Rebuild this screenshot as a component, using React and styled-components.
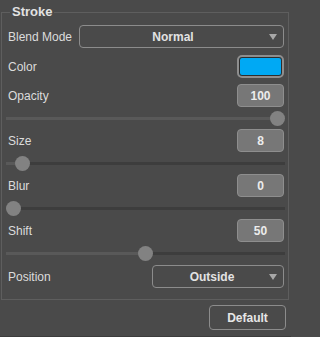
import React from 'react'
import styled, { createGlobalStyle } from 'styled-components'

const GlobalStyle = createGlobalStyle`
  html, body {
    margin: 0;
    padding: 0;
    background: #4a4a4a;
  }
`

const Panel = styled.div`
  width: 291px;
  height: 337px;
  box-sizing: border-box;
  background: #4a4a4a;
  border-bottom: 1px solid #3c3c3c;
  font-family: "Liberation Sans", Arial, sans-serif;
  font-size: 12px;
  color: #dcdcdc;
  display: flex;
  flex-direction: column;
`

const Group = styled.fieldset`
  margin: 4px 2px 0 1px;
  padding: 5px 4px 11px 6px;
  border: 1px solid #5e5e5e;
  display: flex;
  flex-direction: column;
  min-width: 0;

  legend {
    margin-left: 2px;
    padding: 0 2px;
    font-size: 13px;
    font-weight: bold;
    line-height: 16px;
    color: #e2e2e2;
  }
`

const Row = styled.div`
  display: flex;
  align-items: center;
  justify-content: space-between;
  height: 23px;
  margin-top: ${(p) => p.$gap || 0}px;
`

const Label = styled.span`
  white-space: nowrap;
`

const Select = styled.div`
  box-sizing: border-box;
  width: ${(p) => p.$width}px;
  height: 23px;
  border: 1px solid #8c8c8c;
  border-radius: 4px;
  display: flex;
  align-items: center;
  justify-content: center;
  padding-right: ${(p) => p.$shift}px;
  position: relative;
  font-weight: bold;
  color: #e2e2e2;

  &::after {
    content: '';
    position: absolute;
    right: 6px;
    top: 8px;
    border-left: 4px solid transparent;
    border-right: 4px solid transparent;
    border-top: 6px solid #a8a8a8;
  }
`

const Swatch = styled.div`
  box-sizing: border-box;
  width: 47px;
  height: 23px;
  border: 2px solid #8e8e8e;
  border-radius: 5px;
  overflow: hidden;

  div {
    height: 100%;
    border: 1px solid #2e2e2e;
    border-radius: 3px;
    background: #00a9f4;
    box-sizing: border-box;
  }
`

const ValueBox = styled.div`
  box-sizing: border-box;
  width: 47px;
  height: 23px;
  border: 1px solid #8e8e8e;
  border-radius: 4px;
  background: #777777;
  display: flex;
  align-items: center;
  justify-content: center;
  font-weight: bold;
  color: #ececec;
`

const Slider = styled.div`
  position: relative;
  height: 22px;
  margin: 0 -1px 0 -2px;
  display: flex;
  align-items: center;
`

const Track = styled.div`
  position: relative;
  width: 100%;
  height: 3px;
  background: #3d3d3d;
`

const Fill = styled.div`
  height: 100%;
  background: #595959;
`

const Thumb = styled.div`
  position: absolute;
  top: 50%;
  width: 15px;
  height: 15px;
  margin-top: -7px;
  border-radius: 50%;
  background: #828282;
`

const Footer = styled.div`
  flex: 1;
  display: flex;
  justify-content: flex-end;
  align-items: flex-start;
  padding: 5px 5px 0 0;
`

const Button = styled.div`
  box-sizing: border-box;
  width: 77px;
  height: 25px;
  border: 1px solid #8c8c8c;
  border-radius: 4px;
  display: flex;
  align-items: center;
  justify-content: center;
  font-weight: bold;
  color: #e6e6e6;
`

const controls = [
  { label: 'Opacity', value: 100, pct: 1, gap: 6 },
  { label: 'Size', value: 8, pct: 0.034 },
  { label: 'Blur', value: 0, pct: 0 },
  { label: 'Shift', value: 50, pct: 0.5 },
]

const RangeControl = ({ label, value, pct, gap }) => (
  <>
    <Row $gap={gap}>
      <Label>{label}</Label>
      <ValueBox>{value}</ValueBox>
    </Row>
    <Slider>
      <Track>
        <Fill style={{ width: `calc(7px + ${pct} * (100% - 14px))` }} />
      </Track>
      <Thumb style={{ left: `calc(${pct} * (100% - 15px))` }} />
    </Slider>
  </>
)

export default function App() {
  return (
    <Panel>
      <GlobalStyle />
      <Group>
        <legend>Stroke</legend>
        <Row>
          <Label>Blend Mode</Label>
          <Select $width={205} $shift={17}>Normal</Select>
        </Row>
        <Row $gap={7}>
          <Label>Color</Label>
          <Swatch><div /></Swatch>
        </Row>
        {controls.map((c) => (
          <RangeControl key={c.label} {...c} />
        ))}
        <Row $gap={1}>
          <Label>Position</Label>
          <Select $width={132} $shift={12}>Outside</Select>
        </Row>
      </Group>
      <Footer>
        <Button>Default</Button>
      </Footer>
    </Panel>
  )
}
